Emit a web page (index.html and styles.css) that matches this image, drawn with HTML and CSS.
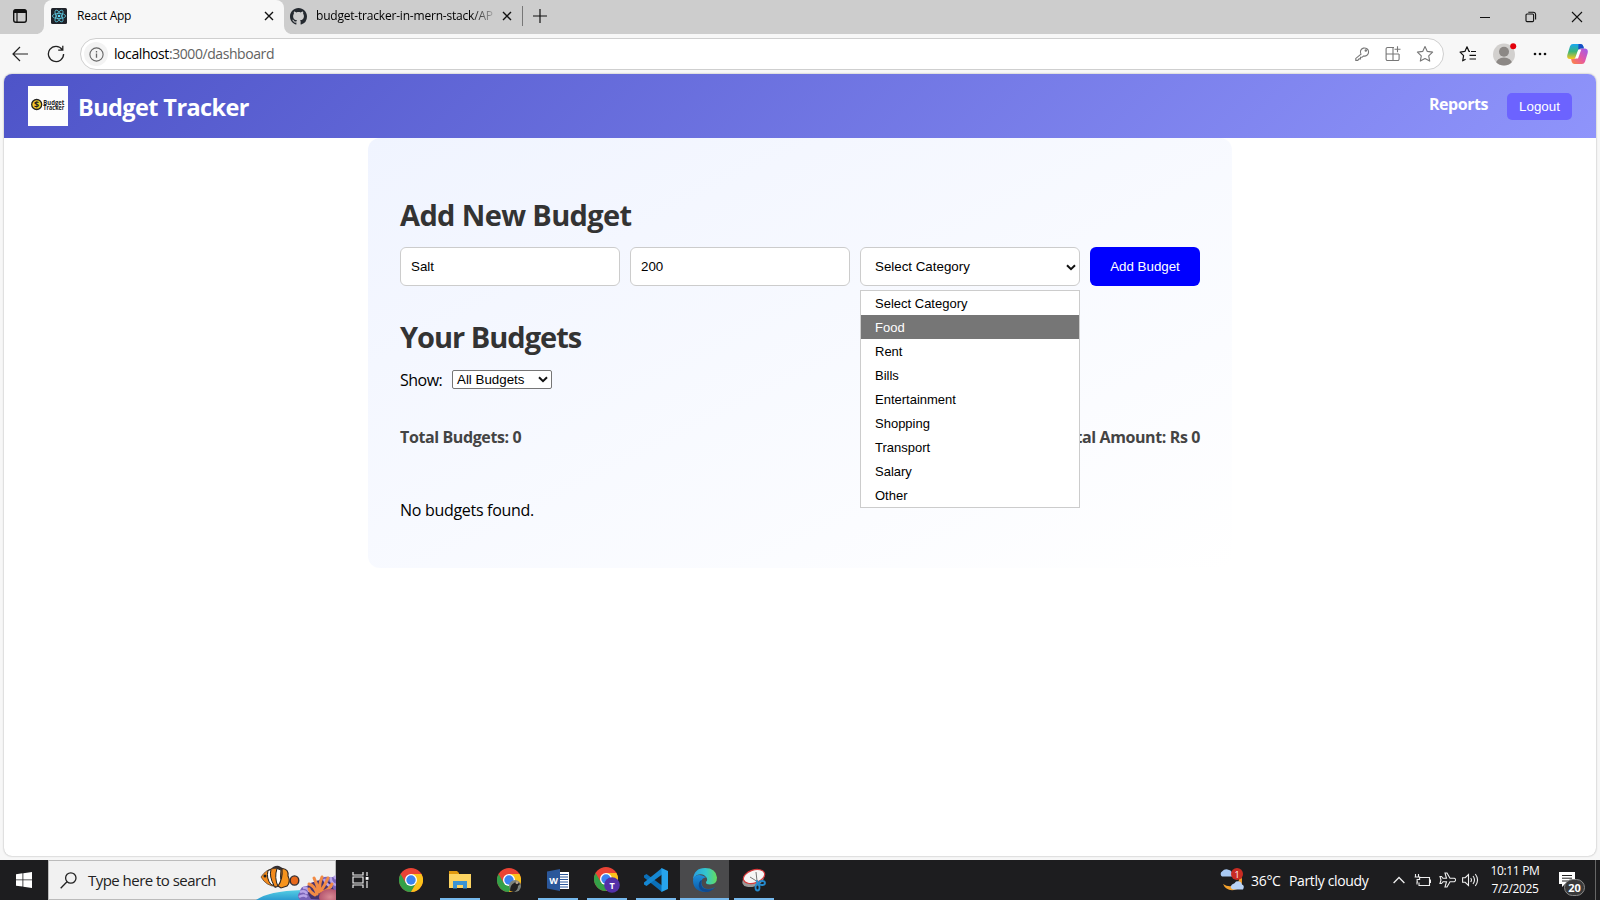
FILE: index.html
```html
<!DOCTYPE html>
<html lang="en">
<head>
<meta charset="utf-8">
<title>React App</title>
<link rel="stylesheet" href="styles.css">
</head>
<body>
<div class="screen">
  <div class="tabstrip">
    <div class="workspace"><svg width="16" height="16" viewBox="0 0 16 16"><rect x="1.7" y="1.7" width="12.6" height="12.6" rx="2.2" fill="none" stroke="#111" stroke-width="1.4"/><path d="M1.5 5V3.5a2 2 0 0 1 2-2h9a2 2 0 0 1 2 2V5z" fill="#111"/><path d="M5 5v9" stroke="#111" stroke-width="1.2"/></svg></div>
    <div class="tab active">
      <svg class="fav" width="16" height="16" viewBox="0 0 16 16"><rect width="16" height="16" rx="1.5" fill="#20232a"/><g fill="none" stroke="#5cc6dd" stroke-width=".8"><ellipse cx="8" cy="8" rx="6.6" ry="2.6"/><ellipse cx="8" cy="8" rx="6.6" ry="2.6" transform="rotate(60 8 8)"/><ellipse cx="8" cy="8" rx="6.6" ry="2.6" transform="rotate(120 8 8)"/></g><circle cx="8" cy="8" r="1.3" fill="#61dafb"/></svg>
      <span class="tabtext t-react">React App</span>
      <svg class="close" width="10" height="10" viewBox="0 0 10 10"><path d="M1 1l8 8M9 1l-8 8" stroke="#111" stroke-width="1.4"/></svg>
    </div>
    <div class="tab second">
      <svg class="fav" width="17" height="17" viewBox="0 0 16 16"><path fill="#24292f" d="M8 0C3.58 0 0 3.58 0 8c0 3.54 2.29 6.53 5.47 7.59.4.07.55-.17.55-.38 0-.19-.01-.82-.01-1.49-2.01.37-2.53-.49-2.69-.94-.09-.23-.48-.94-.82-1.13-.28-.15-.68-.52-.01-.53.63-.01 1.08.58 1.23.82.72 1.21 1.87.87 2.33.66.07-.52.28-.87.51-1.07-1.78-.2-3.64-.89-3.64-3.95 0-.87.31-1.59.82-2.15-.08-.2-.36-1.02.08-2.12 0 0 .67-.21 2.2.82.64-.18 1.32-.27 2-.27s1.36.09 2 .27c1.53-1.04 2.2-.82 2.2-.82.44 1.1.16 1.92.08 2.12.51.56.82 1.27.82 2.15 0 3.07-1.87 3.75-3.65 3.95.29.25.54.73.54 1.48 0 1.07-.01 1.93-.01 2.2 0 .21.15.46.55.38A8.01 8.01 0 0 0 16 8c0-4.42-3.58-8-8-8z"/></svg>
      <span class="tabtext t-git">budget-tracker-in-mern-stack/AP</span>
      <svg class="close" width="10" height="10" viewBox="0 0 10 10"><path d="M1 1l8 8M9 1l-8 8" stroke="#111" stroke-width="1.4"/></svg>
    </div>
    <svg class="plus" width="14" height="14" viewBox="0 0 14 14"><path d="M7 0v14M0 7h14" stroke="#111" stroke-width="1.2"/></svg>
    <div class="winbtns">
      <svg width="12" height="12" viewBox="0 0 12 12"><path d="M1 6.5h10" stroke="#111"/></svg>
      <svg width="12" height="12" viewBox="0 0 12 12"><g fill="none" stroke="#111" stroke-width="1.1"><rect x="1" y="3" width="7.6" height="7.6" rx="1"/><path d="M3.3 1.2h5a2.3 2.3 0 0 1 2.3 2.3v5"/></g></svg>
      <svg width="12" height="12" viewBox="0 0 12 12"><path d="M1 1l10 10M11 1L1 11" stroke="#111" stroke-width="1.1"/></svg>
    </div>
  </div>

  <div class="toolbar">
    <svg class="back" width="16" height="16" viewBox="0 0 16 16"><path d="M16 8H1M8 1L1 8l7 7" fill="none" stroke="#222" stroke-width="1.2"/></svg>
    <svg class="reload" width="18" height="18" viewBox="0 0 18 18"><path d="M15.2 4.6A7.6 7.6 0 1 0 16.6 9M15.8.8v4.4h-4.6" fill="none" stroke="#222" stroke-width="1.3"/></svg>
    <div class="omnibox">
      <div class="info"><svg width="15" height="15" viewBox="0 0 15 15"><circle cx="7.5" cy="7.5" r="6.6" fill="none" stroke="#666" stroke-width="1.1"/><path d="M7.5 6.6v4.2M7.5 4v1.4" stroke="#666" stroke-width="1.3"/></svg></div>
      <div class="url"><span class="host">localhost</span>:3000/dashboard</div>
      <div class="omniicons">
        <svg width="15" height="16" viewBox="0 0 15 16"><g fill="none" stroke="#777" stroke-width="1.1"><path d="M6 8.2A4.1 4.1 0 1 1 8.4 10L7 11.3H5.5v1.6H4L2.8 14.4H.8v-2z" /><circle cx="10.8" cy="4.6" r=".7"/></g></svg>
        <svg width="16" height="16" viewBox="0 0 16 16"><path d="M9 1.500H2.500a1.400 1.400 0 0 0-1.400 1.400v10.200a1.400 1.400 0 0 0 1.400 1.400h10.200a1.400 1.400 0 0 0 1.400-1.400V8M1 8h13M8 1.500v13M12.500.3v6M9.500 3.300h6" fill="none" stroke="#777" stroke-width="1.1"/></svg>
        <svg width="18" height="18" viewBox="0 0 18 18"><path d="M9 1.5l2.3 4.900 5.300.7-3.900 3.700 1 5.300L9 13.500l-4.700 2.600 1-5.300L1.400 7.100l5.300-.7z" fill="none" stroke="#777" stroke-width="1.1" stroke-linejoin="round"/></svg>
      </div>
    </div>
    <svg class="favs" width="18" height="18" viewBox="0 0 18 18"><path d="M11 6.3H9.9L8 1.8 5.9 6.4l-4.8.7 3.5 3.5-.9 5.2 2.9-1.5M12 6.5h5M10.5 10.3H17M10.5 14H17" fill="none" stroke="#111" stroke-width="1.2" stroke-linejoin="round"/></svg>
    <svg class="avatar" width="24" height="24" viewBox="0 0 24 24"><clipPath id="av"><circle cx="11" cy="12.5" r="11"/></clipPath><g clip-path="url(#av)"><rect width="24" height="24" fill="#d2d0ce"/><circle cx="11" cy="9.7" r="5" fill="#8c8885"/><ellipse cx="11" cy="21.3" rx="8" ry="5.8" fill="#8c8885"/></g><circle cx="20.2" cy="4.2" r="3" fill="#e3000b"/></svg>
    <svg class="dots" width="14" height="4" viewBox="0 0 14 4"><g fill="#111"><circle cx="2" cy="2" r="1.3"/><circle cx="7" cy="2" r="1.3"/><circle cx="12" cy="2" r="1.3"/></g></svg>
    <svg class="copilot" width="23" height="22" viewBox="0 0 22 22"><defs><linearGradient id="c1" x1="0" y1="0" x2="0" y2="1"><stop offset="0" stop-color="#18a7f2"/><stop offset=".5" stop-color="#3ab57a"/><stop offset="1" stop-color="#ffc81a"/></linearGradient><linearGradient id="c2" x1="1" y1="0" x2="0" y2="1"><stop offset="0" stop-color="#9a5cf0"/><stop offset=".5" stop-color="#e457a5"/><stop offset="1" stop-color="#ff8a3c"/></linearGradient></defs><path d="M6.5 1H14q2 0 2.7 2l.7 2.6h-3q-2 0-2.7 2l-2 6.5q-.7 2-2.6 2H3.4Q0 16 .8 12L3.5 3.2Q4.3 1 6.5 1z" fill="url(#c1)"/><path d="M12 1h2q2 0 2.7 2l.7 2.6h-3q-2 0-2.7 2z" fill="#174fc6"/><path d="M15.5 21H8q-2 0-2.7-2l-.7-2.9h2.7q2 0 2.6-2l2-6.5q.7-2 2.7-2h4Q22 6 21.2 10l-2.7 8.8Q17.700 21 15.5 21z" fill="url(#c2)"/><path d="M11.800 6.500h3l-3.300 9H8.500z" fill="#fff"/></svg>
  </div>

  <div class="page">
    <div class="navbar">
      <svg class="logo" width="40" height="40" viewBox="0 0 40 40"><rect width="40" height="40" fill="#fdfdfd"/><circle cx="8.700" cy="18.500" r="5" fill="#f4cb2c" stroke="#222" stroke-width="1.300"/><text x="8.700" y="21.700" text-anchor="middle" class="lg-dollar">$</text><text x="15.300" y="18.600" class="lg" textLength="21" lengthAdjust="spacingAndGlyphs">Budget</text><text x="15.300" y="24.400" class="lg" textLength="21" lengthAdjust="spacingAndGlyphs">Tracker</text></svg>
      <span class="brand">Budget Tracker</span>
      <span class="reports">Reports</span>
      <span class="logout">Logout</span>
    </div>
    <div class="card">
      <div class="h2 h-add">Add New Budget</div>
      <div class="form">
        <div class="field">Salt</div>
        <div class="field">200</div>
        <div class="field select">Select Category
          <svg class="chev" width="10" height="7" viewBox="0 0 10 7"><path d="M1 1.2l4 4 4-4" fill="none" stroke="#111" stroke-width="2"/></svg>
          <div class="menu">
            <div>Select Category</div><div class="hl">Food</div><div>Rent</div><div>Bills</div><div>Entertainment</div><div>Shopping</div><div>Transport</div><div>Salary</div><div>Other</div>
          </div>
        </div>
        <div class="add">Add Budget</div>
      </div>
      <div class="h2 h-your">Your Budgets</div>
      <div class="filter"><span class="show">Show:</span><div class="small">All Budgets<svg width="10" height="7" viewBox="0 0 10 7"><path d="M1 1.2l4 4 4-4" fill="none" stroke="#111" stroke-width="2"/></svg></div></div>
      <div class="totals"><span class="tb">Total Budgets: 0</span><span class="ta">Total Amount: Rs 0</span></div>
      <div class="none"><span>No budgets found.</span></div>
    </div>
  </div>

  <div class="taskbar">
    <div class="start"><svg width="16" height="16" viewBox="0 0 16 16"><path d="M0 2.2l6.5-.9v6.2H0zM7.3 1.2L16 0v7.5H7.3zM0 8.3h6.5v6.3L0 13.7zM7.3 8.3H16V16l-8.7-1.2z" fill="#fff"/></svg></div>
    <div class="search">
      <svg class="mag" width="17" height="17" viewBox="0 0 17 17"><g fill="none" stroke="#222" stroke-width="1.3"><circle cx="10.8" cy="6" r="5.2"/><path d="M7 9.8L.7 16.2"/></g></svg>
      <span class="stext">Type here to search</span>
      <svg class="fish" width="82" height="38" viewBox="0 0 82 38"><defs><linearGradient id="sea" x1="0" y1="0" x2="0" y2="1"><stop offset="0" stop-color="#55cfe4"/><stop offset="1" stop-color="#2c9bd0"/></linearGradient><radialGradient id="pink"><stop offset="0" stop-color="#d98a94"/><stop offset="1" stop-color="#b5566f"/></radialGradient></defs>
        <path d="M2 38Q14 29 48 28v10z" fill="url(#sea)"/>
        <path d="M16 8Q20 3 25 4l7 4-10 3zM17 21l4 5 5-2z" fill="#343033"/>
        <path d="M7 15Q12 7 20 6.500q10-1 14 8-1 10-12 10Q12 24 7 15z" fill="#f28a1c" stroke="#4a3526" stroke-width=".7"/>
        <path d="M14 8.500l3-1q-2 7 3 16l-3-1q-5-6-3-14zM23 6.500l4 1.500q-2 8 2 15l-5 1.500q-4-9-1-18z" fill="#fff" stroke="#222" stroke-width="1"/>
        <path d="M28 6.500Q35 7 34 14q3 6-1 10l-6 2-3-2q5-7 4-17.500z" fill="#f7941d" stroke="#332722" stroke-width="1.100"/>
        <ellipse cx="40.500" cy="18.500" rx="4.300" ry="4.600" fill="#e8681a" stroke="#332d31" stroke-width="1.400"/><circle cx="11" cy="14" r="1.500" fill="#222"/>
        <path d="M46 38q-4-5 0-8 0-6 7-6 4-5 11-4 3-6 11-5l7 0v23z" fill="#7a64b8"/>
        <path d="M57 37Q51 28 54 24q9-9 22-4l4 8-9 10z" fill="#47346f"/>
        <path d="M46 30q5-2 7 2M49 26q5-1 6 4M45 35q5-3 8 0M77 15q-1 6 5 8M70 17q2 6 8 8M80 14l2 3" fill="none" stroke="#b9a5e8" stroke-width="2.500"/>
        <path d="M61 33Q56 30 55 27M63 32q-2-8-8-10M65 30q-2-8-5-14M67 29q4-6 7-13M66 28q-1-6 2-13M69 30q6-2 9-8" fill="none" stroke="#f28b45" stroke-width="3" stroke-linecap="round"/>
        <ellipse cx="76" cy="35" rx="11" ry="8" fill="url(#pink)"/></svg>
    </div>
    <div class="apps">
      <div class="app tv"><svg width="18" height="16" viewBox="0 0 18 16"><path d="M1 0v3h10V0M1 16v-3h10v3M1 5h10v6H1zM15 0v4M15 9v7" fill="none" stroke="#eee" stroke-width="1.2"/><rect x="13.7" y="5" width="2.8" height="2.8" fill="#fff"/></svg></div>
      <div class="app"><svg width="24" height="24" viewBox="0 0 24 24"><g id="chrome"><circle cx="12" cy="12" r="12" fill="#ea4335"/><path d="M1.6 6A12 12 0 0 0 12 24l5.2-9L12 12 6.8 15z" fill="#34a048"/><path d="M22.4 6A12 12 0 0 1 12 24l5.2-9L12 6z" fill="#fbc21b"/><circle cx="12" cy="12" r="6" fill="#fff"/><circle cx="12" cy="12" r="4.7" fill="#3b83f0"/></g></svg></div>
      <div class="app run"><svg width="22" height="20" viewBox="0 0 22 20"><path d="M0 1h8l2 2v5H0z" fill="#e09a10"/><path d="M0 4h22v14H0z" fill="#fcd462"/><path d="M4 18.5V11h14v7.5h-4V15H8v3.5z" fill="#3a94d4"/></svg></div>
      <div class="app"><svg width="24" height="24" viewBox="0 0 24 24"><use href="#chrome"/><circle cx="18" cy="18" r="6" fill="#7d837c"/><path d="M13 23q0-6 4-8l3-2 3 3-2 2q0 4-4 6z" fill="#222"/><circle cx="20" cy="14.5" r="1.5" fill="#b9a58e"/></svg></div>
      <div class="app run"><svg width="22" height="22" viewBox="0 0 22 22"><path d="M11 3h11v17H11z" fill="#fff"/><path d="M13 5.5h8M13 8h8M13 10.5h8M13 13h8M13 15.500h8M13 18h8" stroke="#2b579a"/><path d="M0 2.500L13 0v22L0 19.500z" fill="#2b579a"/><text x="6.5" y="15" class="word" text-anchor="middle">W</text></svg></div>
      <div class="app run"><svg class="pers" width="26" height="26" viewBox="0 0 26 26"><use href="#chrome"/><circle cx="18" cy="18" r="7.8" fill="#5430a8"/><text x="18" y="21.500" class="tee" text-anchor="middle">T</text></svg></div>
      <div class="app run"><svg width="24" height="24" viewBox="0 0 24 24"><path d="M0 7.500l2.500-1.500L18 17.500V24L0 9.500z" fill="#0a6fb8"/><path d="M0 16.500L2.500 18 18 6.500V0L0 14.500z" fill="#1587d2"/><path d="M17.500 0L24 3v18l-6.500 3z" fill="#27a4ee"/></svg></div>
      <div class="app run cur"><svg width="24" height="24" viewBox="0 0 24 24"><defs><linearGradient id="e1" x1="0" y1="0" x2="1" y2="0"><stop offset="0" stop-color="#289ee0"/><stop offset=".55" stop-color="#34c6cd"/><stop offset="1" stop-color="#65dd5c"/></linearGradient><linearGradient id="e2" x1="0" y1="0" x2="0" y2="1"><stop offset="0" stop-color="#1c8fdc"/><stop offset="1" stop-color="#0c59a4"/></linearGradient></defs><path d="M0 11.500Q1 0 12 0q11 0 12 9.500 0 7-7 7-4.500 0-4-2.500 2-2 .5-4.500Q10 4.500 4 7q-3 1.500-4 4.500z" fill="url(#e1)"/><path d="M0 12Q1 7 6.500 7q4 0 6.500 2.500-5 0-4.500 6 1 5.500 7 5.500 4 0 6.500-2Q18 24 12 24 0 23.500 0 12z" fill="url(#e2)"/><path d="M9 12q-3 10 8 9.500 3 0 5.500-2.500Q18 24 13 24 4 22 6 15q1-3 3-3z" fill="#104a8e"/></svg></div>
      <div class="app run"><svg width="24" height="24" viewBox="0 0 24 24"><ellipse cx="11" cy="12" rx="11" ry="6.500" transform="rotate(-18 11 12)" fill="#999"/><ellipse cx="12" cy="8.500" rx="11" ry="6.500" transform="rotate(-18 12 8.500)" fill="#f6f6f6" stroke="#d5393b" stroke-width="1.200"/><path d="M14 4l1 9M8 9l8 5" stroke="#777"/><path d="M14 13l4 3M15 12v5" stroke="#2c8fce" stroke-width="1.500"/><g fill="none" stroke="#2489cc" stroke-width="1.800"><ellipse cx="20" cy="15" rx="3" ry="2"/><ellipse cx="15.500" cy="19.500" rx="2" ry="3"/></g></svg></div>
    </div>
    <div class="tray">
      <svg class="weather" width="26" height="24" viewBox="0 0 26 24"><path d="M18 5q5 8-2 12-6 3-12-1 3 7 11 6 9-2 8-11-1-4-5-6z" fill="#f4a12c"/><path d="M3 8.500a3 3 0 0 1 0-5Q6 0 10 2q3 0 4 6.500z" fill="#a9c9f3"/><path d="M14 21.500q-4-2-1-5 3-1 4-3 5-1 6 3 3 1 1 5z" fill="#b9d3f6"/><circle cx="18" cy="6" r="6" fill="#c92c23"/><text x="18" y="9.500" text-anchor="middle" class="one">1</text></svg>
      <span class="temp">36°C</span><span class="cloudy">Partly cloudy</span>
      <svg class="up" width="12" height="8" viewBox="0 0 12 8"><path d="M.6 7L6 1.500 11.400 7" fill="none" stroke="#eee" stroke-width="1.300"/></svg>
      <svg class="bat" width="17" height="13" viewBox="0 0 17 13"><path d="M6 3.500h9.500v8H5V8.500M15.500 6h1v3M1.500 0v3M4.500 0v3M.6 3h5v2.500H3.100V8H4M3 8v2.500" fill="none" stroke="#eee" stroke-width="1.100"/></svg>
      <svg class="plane" width="17" height="16" viewBox="0 0 17 16"><path d="M6 1h2l3 5.300h4.300q1.500.7 1.500 1.700T15.300 9.700H11L8 15H6l1.500-5.300H4L2.500 11.500H1L2 8 1 4.500h1.500L4 6.300h3.500z" fill="none" stroke="#eee" stroke-width="1.100"/></svg>
      <svg class="vol" width="17" height="14" viewBox="0 0 17 14"><path d="M.6 4.700h2.600L6.500 1.500v11L3.200 9.300H.6zM8.700 5q1.500 2 0 4M11 3q3 4 0 8M13.300 1q4.500 6 0 12" fill="none" stroke="#eee" stroke-width="1.100"/></svg>
      <div class="clock"><span class="time">10:11 PM</span><span class="date">7/2/2025</span></div>
      <svg class="note" width="27" height="26" viewBox="0 0 27 26"><path d="M0 1h16v12H6l-3 3v-3H0z" fill="#fff"/><path d="M3 4.500h10M3 7.200h10M3 10h6" stroke="#222"/><rect x="5.500" y="8.500" width="20" height="16" rx="8" fill="#3a3a3a" stroke="#888"/><text x="15.500" y="20.500" text-anchor="middle" class="twenty">20</text></svg>
      <div class="peek"></div>
    </div>
  </div>
</div>
</body>
</html>
```
FILE: styles.css
```css
* { box-sizing: border-box; }
body { margin: 0; overflow: hidden; font-family: "Open Sans", "Noto Sans", sans-serif; color: #000; }
svg { display: block; flex: none; }
span { white-space: nowrap; }
.screen { width: 1600px; height: 900px; display: flex; flex-direction: column; background: #f7f7f7; }

.tabstrip { height: 34px; background: linear-gradient(#cdcdcd, #cdcdcd) 0 0 / 38px 34px no-repeat, linear-gradient(#f7f7f7, #f7f7f7) 38px 20px / 252px 14px no-repeat, #cdcdcd; display: flex; align-items: center; flex: none; }
.workspace { width: 44px; height: 34px; padding: 8px 0 0 12px; background: #cdcdcd; border-bottom-right-radius: 8px; }
.tab { height: 34px; display: flex; align-items: center; flex: none; font-size: 12px; padding-bottom: 2px; }
.active { width: 240px; background: #f7f7f7; border-radius: 8px 8px 0 0; padding-left: 7px; padding-right: 10px; }
.second { width: 239px; padding-left: 6px; padding-right: 11px; background: #cdcdcd; border-bottom-left-radius: 8px; }
.second::after { content: ""; width: 1px; height: 20px; background: #777; margin-left: 10px; margin-right: -11px; }
.tabtext { margin-left: 10px; line-height: 16px; }
.t-react { letter-spacing: -.22px; }
.t-git { margin-left: 9px; width: 178px; overflow: hidden; letter-spacing: -.2px; -webkit-mask-image: linear-gradient(90deg, #000 155px, transparent 182px); mask-image: linear-gradient(90deg, #000 155px, transparent 182px); }
.close { margin-left: auto; }
.plus { margin-left: 10px; margin-bottom: 2px; }
.winbtns { margin-left: auto; display: flex; gap: 34px; padding-right: 17px; }

.toolbar { height: 40px; display: flex; align-items: center; flex: none; padding-left: 12px; }
.reload { margin-left: 19px; }
.omnibox { margin-left: 15px; width: 1364px; height: 32px; border: 1px solid #cfcfcf; border-radius: 16px; background: #fff; display: flex; align-items: center; padding-left: 3px; }
.info { width: 24px; height: 24px; border-radius: 50%; background: #f3f3f3; display: flex; align-items: center; justify-content: center; }
.url { margin-left: 6px; font-size: 14px; letter-spacing: -.42px; color: #626262; line-height: 20px; }
.host { color: #000; }
.omniicons { margin-left: auto; display: flex; align-items: center; gap: 15px; padding-right: 9px; }
.favs { margin-left: 15px; }
.avatar { margin-left: 16px; }
.dots { margin-left: 16px; }
.copilot { margin-left: 19px; }

.page { margin: 0 4px; height: 782px; background: #fff; border-radius: 8px; overflow: hidden; box-shadow: 0 0 2px rgba(0,0,0,.35); flex: none; }
.navbar { height: 64px; background: linear-gradient(135deg, #4e54c8, #8f94fb); display: flex; align-items: center; padding: 0 24px; }
.brand { margin-left: 10px; font-size: 23.5px; font-weight: 700; color: #fff; line-height: 30px; letter-spacing: -.6px; padding-top: 2px; }
.lg { font: 700 6.5px "Open Sans", sans-serif; fill: #222; }
.lg-dollar { font: 700 9px "Open Sans", sans-serif; fill: #222; }
.reports { margin-left: auto; font-size: 16px; font-weight: 700; color: #fff; letter-spacing: -.45px; line-height: 20px; padding-bottom: 4px; }
.logout { margin-left: 19px; width: 65px; height: 27px; border-radius: 5px; background: #6c63ff; color: #fff; font: 13.33px/27px "Liberation Sans", sans-serif; text-align: center; }

.card { width: 864px; height: 430px; margin: 0 auto; border-radius: 12px; background: linear-gradient(to bottom right, #f0f4ff, #fff); padding: 57px 32px 0; }
.h2 { font-size: 29px; line-height: 40px; font-weight: 700; color: #333; white-space: nowrap; }
.h-add { letter-spacing: -.63px; }
.form { display: flex; gap: 10px; margin-top: 12px; }
.field { position: relative; width: 220px; height: 39px; border: 1px solid #ccc; border-radius: 6px; background: #fff; padding-left: 10px; font: 13.33px/37px "Liberation Sans", sans-serif; }
.select { padding-left: 14px; }
.chev { position: absolute; right: 3px; top: 16px; }
.menu { position: absolute; z-index: 2; left: -1px; top: 42px; width: 220px; height: 218px; border: 1px solid #ccc; background: #fff; }
.menu div { height: 24px; line-height: 25px; padding-left: 14px; font-size: 13px; }
.menu .hl { background: #767676; color: #fff; }
.add { width: 110px; height: 39px; border-radius: 6px; background: #00f; color: #fff; font: 13.33px/39px "Liberation Sans", sans-serif; text-align: center; }
.h-your { margin-top: 31px; letter-spacing: -1px; }
.filter { display: flex; margin-top: 13px; height: 22px; }
.show { width: 52px; font-size: 16px; line-height: 20px; letter-spacing: -.5px; }
.small { width: 100px; height: 19px; border: 1px solid #767676; border-radius: 2px; background: #fff; display: flex; align-items: center; justify-content: space-between; padding: 0 3px 0 4px; font: 13.33px/17px "Liberation Sans", sans-serif; }
.totals { margin-top: 33px; display: flex; justify-content: space-between; font-size: 16px; font-weight: 700; color: #444; line-height: 24px; letter-spacing: -.39px; }
.none { margin-top: 49px; font-size: 16px; line-height: 24px; letter-spacing: -.3px; }

.taskbar { margin-top: 4px; height: 40px; background: #1d1d1f; display: flex; color: #fff; flex: none; }
.start { width: 48px; display: flex; align-items: center; justify-content: center; }
.search { width: 288px; height: 40px; background: #f1f1f1; border: 1px solid #bbb; display: flex; align-items: center; color: #222; padding-left: 11px; position: relative; }
.stext { margin-left: 11px; font-size: 15px; letter-spacing: -.53px; }
.fish { position: absolute; right: -1px; top: 1px; }
.apps { display: flex; }
.app { width: 49px; height: 40px; display: flex; align-items: center; justify-content: center; position: relative; }
.tv { width: 50px; }
.run::after { content: ""; position: absolute; left: 5px; right: 4px; bottom: 0; height: 2px; background: #76b9ed; }
.cur { background: #4a4a4c; }
.cur::after { left: 0; right: 0; }
.word { font: 700 9px "Open Sans", sans-serif; fill: #fff; }
.tee { font: 700 9px "Open Sans", sans-serif; fill: #fff; }
.tray { margin-left: auto; display: flex; align-items: center; padding-right: 4px; font-size: 14px; }
.one { font: 9px "Open Sans", sans-serif; fill: #fff; }
.temp { margin-left: 6px; width: 38px; letter-spacing: -.3px; }
.cloudy { width: 79px; letter-spacing: -.35px; }
.up { margin-left: 25px; }
.bat { margin-left: 9px; }
.plane { margin-left: 8px; }
.vol { margin-left: 6px; }
.clock { width: 50px; margin-left: 11px; display: flex; flex-direction: column; align-items: center; font-size: 12px; line-height: 18px; letter-spacing: -.35px; }
.note { margin-left: 19px; margin-top: 8px; }
.twenty { font: 700 11px "Open Sans", sans-serif; fill: #fff; }
.peek { width: 1px; height: 40px; margin-left: 9px; background: #666; }
```
